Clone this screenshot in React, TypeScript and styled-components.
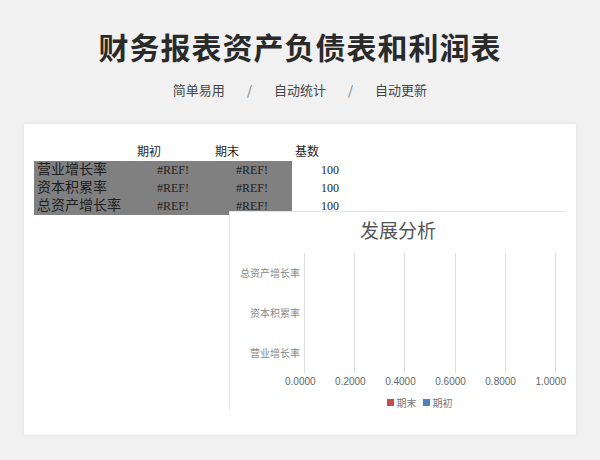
import React from "react";
import styled, { createGlobalStyle } from "styled-components";

const Global = createGlobalStyle`
	body {
		margin: 0;
		background: #f1f1f1;
		font-family: "Noto Sans CJK SC", "Noto Sans", sans-serif;
	}
`;

const rows = ["营业增长率", "资本积累率", "总资产增长率"];
const ticks = ["0.0000", "0.2000", "0.4000", "0.6000", "0.8000", "1.0000"];

const App = () => (
	<Page>
		<Global />
		<Title>财务报表资产负债表和利润表</Title>
		<Sub>
			<span>简单易用</span>
			<Sep>/</Sep>
			<span>自动统计</span>
			<Sep>/</Sep>
			<span>自动更新</span>
		</Sub>
		<Card>
			<Table>
				<Cell />
				<Cell>期初</Cell>
				<Cell>期末</Cell>
				<Cell>基数</Cell>
				{rows.map((r) => (
					<React.Fragment key={r}>
						<Cell $gray $big>{r}</Cell>
						<Cell $gray $center>#REF!</Cell>
						<Cell $gray $center>#REF!</Cell>
						<Cell $right>100</Cell>
					</React.Fragment>
				))}
			</Table>
			<Chart>
				<ChartTitle>发展分析</ChartTitle>
				<Plot>
					<Cats>
						{[...rows].reverse().map((r) => (
							<span key={r}>{r}</span>
						))}
					</Cats>
					<Grid>
						{ticks.map((t) => (
							<Line key={t} />
						))}
					</Grid>
				</Plot>
				<Ticks>
					{ticks.map((t) => (
						<span key={t}>{t}</span>
					))}
				</Ticks>
				<Legend>
					<Swatch $c="#c0504d" />期末
					<Swatch $c="#4f81bd" />期初
				</Legend>
			</Chart>
		</Card>
	</Page>
);

const Page = styled.div`
	width: 600px;
	height: 460px;
	overflow: hidden;
`;

const Title = styled.h1`
	margin: 0;
	padding-top: 24px;
	height: 44px;
	text-align: center;
	font-size: 30px;
	font-weight: 700;
	color: #2a2a2a;
	letter-spacing: 1px;
`;

const Sub = styled.div`
	margin-top: 12px;
	display: flex;
	justify-content: center;
	gap: 18px;
	font-size: 13px;
	color: #444;
`;

const Sep = styled.span`
	color: #777;
	padding: 0 4px;
`;

const Card = styled.div`
	position: relative;
	margin: 25px 24px 0;
	height: 311px;
	background: #fff;
	box-shadow: 0 0 4px rgba(0, 0, 0, 0.08);
	padding: 19px 0 0 10px;
	box-sizing: border-box;
`;

const Table = styled.div`
	display: grid;
	grid-template-columns: 100px 78px 80px 50px;
	grid-auto-rows: 18px;
	font-family: "Liberation Serif", "Noto Sans CJK SC", serif;
	color: #222;
`;

const Cell = styled.div<{ $gray?: boolean; $center?: boolean; $right?: boolean; $big?: boolean }>`
	font-size: ${(p) => (p.$big ? 14 : 12)}px;
	line-height: 18px;
	padding: 0 3px;
	white-space: nowrap;
	color: #1e1e1e;
	background: ${(p) => (p.$gray ? "#808080" : "transparent")};
	text-align: ${(p) => (p.$center ? "center" : p.$right ? "right" : "left")};
`;

const Chart = styled.div`
	position: absolute;
	left: 205px;
	top: 87px;
	width: 336px;
	height: 198px;
	background: #fff;
	border-left: 1px solid #e4e4e4;
	border-top: 1px solid #e4e4e4;
	display: flex;
	flex-direction: column;
`;

const ChartTitle = styled.div`
	text-align: center;
	font-size: 19px;
	color: #555;
	margin-top: 4px;
	height: 38px;
`;

const Plot = styled.div`
	display: flex;
	height: 124px;
`;

const Cats = styled.div`
	width: 70px;
	display: flex;
	flex-direction: column;
	justify-content: space-around;
	align-items: flex-end;
	font-size: 10px;
	color: #888;
	padding-right: 4px;
`;

const Grid = styled.div`
	flex: 1;
	display: flex;
	justify-content: space-between;
	padding-right: 10px;
`;

const Line = styled.div`
	width: 1px;
	background: #dedede;
`;

const Ticks = styled.div`
	display: flex;
	justify-content: space-between;
	padding: 3px 0 0 55px;
	font-family: "Liberation Sans", sans-serif;
	font-size: 10px;
	color: #666;
`;

const Legend = styled.div`
	margin-top: 8px;
	display: flex;
	justify-content: center;
	align-items: center;
	gap: 3px;
	font-size: 10px;
	color: #777;
	padding-left: 40px;
`;

const Swatch = styled.span<{ $c: string }>`
	width: 7px;
	height: 7px;
	background: ${(p) => p.$c};
	margin-left: 3px;
`;

export default App;
